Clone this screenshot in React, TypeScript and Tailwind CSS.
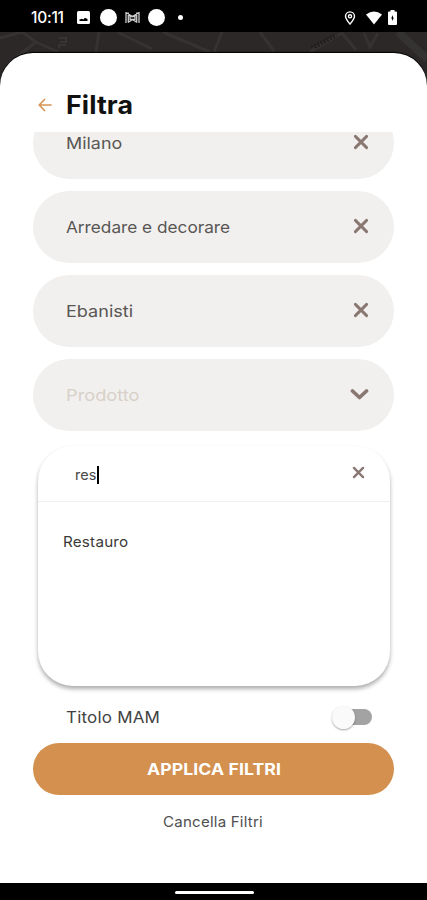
import React from "react";

function Cross({ className }: { className: string }) {
  return (
    <svg viewBox="0 0 16 16" className={className} fill="none" stroke="#897772" strokeWidth="2.9" strokeLinecap="round">
      <path d="M2.4 2.4 13.6 13.6M13.6 2.4 2.4 13.6" />
    </svg>
  );
}

function StatusBar() {
  return (
    <div className="flex h-8 shrink-0 items-center bg-black pt-[3px] text-white">
      <span className="ml-[31px] w-[46px] text-[15.5px] leading-5 font-medium tracking-[-0.25px]">10:11</span>
      <svg viewBox="0 0 13 13" className="h-[13px] w-[13px]">
        <rect width="13" height="13" rx="1.5" fill="#fff" />
        <path d="M2.5 10V8.5L5 7.8 6.3 8.6 8 6.7 10.5 8V10Z" fill="#000" />
      </svg>
      <div className="ml-[9.5px] h-[17px] w-[17px] rounded-full bg-white" />
      <svg viewBox="0 0 15 13" className="ml-[8px] h-[13px] w-[15px]" fill="none" stroke="#ccc" strokeWidth="1.3">
        <path d="M1 1v11M14 1v11M3.3 1.5v10M11.7 1.5v10M1 1.5l6.5 4 6.5-4M3 11.5l4.5-3 4.5 3" />
        <path d="M5 5.5h5v3H5Z" />
      </svg>
      <div className="ml-[8px] h-[17px] w-[17px] rounded-full bg-white" />
      <div className="ml-[13px] h-[5px] w-[5px] rounded-full bg-white" />
      <svg viewBox="0 0 12 15" className="ml-[161px] h-[14px] w-[12px]" fill="none" stroke="#fff" strokeWidth="1.5">
        <path d="M6 14C3.5 11 1.2 8.4 1.2 5.7a4.8 4.8 0 0 1 9.6 0C10.8 8.4 8.5 11 6 14Z" />
        <circle cx="6" cy="5.7" r="1.7" />
      </svg>
      <svg viewBox="0 0 17 14" className="ml-[10px] h-[14px] w-[16px]">
        <path d="M0 3.2Q8.5-2.8 17 3.2L8.5 14Z" fill="#fff" />
      </svg>
      <svg viewBox="0 0 9 15" className="ml-[6.5px] h-[15px] w-[9px]">
        <path d="M1 1.5h1.5V0h4v1.5H8q1 0 1 1V14q0 1-1 1H1q-1 0-1-1V2.5q0-1 1-1Z" fill="#fff" />
        <path d="M5 5 3 8.5H4V11L6 7.8H5Z" fill="#000" />
      </svg>
    </div>
  );
}

function MapStrip() {
  return (
    <svg viewBox="0 0 427 72" className="absolute top-8 left-0 h-[72px] w-[427px]">
      <rect width="427" height="72" fill="#2b2827" />
      <g fill="none" stroke="#353232" strokeWidth="3">
        <path d="M0 6 22 0 36 10 8 32M36 10 58 20M99 0 96 20M117 0 152 17M163 0 210 20M222 0 214 20M260 0 274 19M310 20 342 1 356 18M364 1 370 15 378 1" />
        <path d="M398 0 427 27" strokeWidth="8" />
      </g>
      <g fill="none" stroke="#1d1b1b" strokeWidth="1.5" strokeDasharray="2 1.5">
        <path d="M311 15 334 3M315 16 337 4" />
      </g>
      <path d="M59 6h7v4h-6M59 16v-3h7" fill="none" stroke="#3b3838" strokeWidth="1.5" />
    </svg>
  );
}

function Pill({ label, stretch, placeholder }: { label: string; stretch: string; placeholder?: boolean }) {
  return (
    <div
      className={
        "flex h-[72px] shrink-0 items-center justify-between rounded-full bg-[#f1f0ee] pl-[33px] text-[16.5px] " +
        (placeholder ? "pr-[25px] text-[#d8d0c8]" : "pr-[25.5px] text-[#595654]")
      }
    >
      <span className={"origin-left pt-px " + stretch}>{label}</span>
      {placeholder ? (
        <svg viewBox="0 0 19 13" className="h-[13px] w-[19px]" fill="none" stroke="#897772" strokeWidth="3.7" strokeLinecap="round" strokeLinejoin="round">
          <path d="M2.5 3 9.5 9.5 16.5 3" />
        </svg>
      ) : (
        <Cross className="mt-[-1px] h-[16px] w-[16px]" />
      )}
    </div>
  );
}

export default function App() {
  return (
    <div className="relative flex h-[900px] w-[427px] flex-col overflow-hidden bg-black font-['Inter',sans-serif]">
      <StatusBar />
      <MapStrip />
      <main className="relative mt-[21px] flex h-[829.5px] shrink-0 flex-col rounded-t-[33px] bg-white px-[33px] shadow-[0_-1px_1px_#000]">
        <header className="flex h-[79px] shrink-0 items-center pt-[24px]">
          <svg viewBox="0 0 14 14" className="ml-[5px] h-[14px] w-[14px]" fill="none" stroke="#d79556" strokeWidth="1.7" strokeLinejoin="round" strokeLinecap="round">
            <path d="M13 7H1.2M6.5 1.5 1.2 7l5.3 5.5" />
          </svg>
          <h1 className="ml-[14px] origin-left scale-x-[1.070] text-[25px] leading-[30px] font-bold tracking-[0.1px] text-[#111]">Filtra</h1>
        </header>
        <section className="flex h-[298.5px] shrink-0 flex-col justify-end gap-[12px] overflow-hidden">
          <Pill label="Milano" stretch="scale-x-[1.085]" />
          <Pill label="Arredare e decorare" stretch="scale-x-[1.043]" />
          <Pill label="Ebanisti" stretch="scale-x-[1.095]" />
          <Pill label="Prodotto" stretch="scale-x-[1.105]" placeholder />
        </section>
        <section className="mt-[15.5px] mr-[4px] ml-[5px] h-[240px] shrink-0 rounded-[35px] bg-white shadow-[0_3px_4px_rgba(0,0,0,0.32)]">
          <div className="flex h-[56px] items-center border-b border-[#f0f0f0] pt-[2px] pr-[25.5px] pl-[37px]">
            <span className="text-[14.5px] text-[#484848]">res</span>
            <span className="ml-px h-[18px] w-[2px] bg-black" />
            <Cross className="mt-[-5px] ml-auto h-[13px] w-[13px]" />
          </div>
          <div className="pt-[30px] pl-[24.5px] text-[14.5px] leading-[20px] text-[#3a3a3a]">
            <span className="inline-block origin-left scale-x-[1.050] tracking-[0.2px]">Restauro</span>
          </div>
        </section>
        <div className="flex h-[57px] shrink-0 items-center justify-between pt-[5px] pr-[22.5px] pl-[33px] text-[16px] text-[#424242]">
          <span className="origin-left scale-x-[1.060] tracking-[0.2px]">Titolo MAM</span>
          <div className="flex h-[16px] w-[36px] items-center rounded-full bg-[#a3a3a3]">
            <div className="ml-[-4px] h-[23px] w-[23px] shrink-0 rounded-full bg-[#fafafa] shadow-[0_1px_2px_rgba(0,0,0,0.35)]" />
          </div>
        </div>
        <button className="flex h-[52px] shrink-0 items-center justify-center rounded-full bg-[#d3904e] text-[16px] font-bold text-white">
          <span className="scale-x-[1.100] tracking-[0.1px]">APPLICA FILTRI</span>
        </button>
        <button className="mt-[17px] flex h-[20px] items-center justify-center text-[14.5px] text-[#505050]">
          <span className="scale-x-[1.040] tracking-[0.2px]">Cancella Filtri</span>
        </button>
      </main>
      <nav className="flex flex-1 items-center justify-center bg-black pt-[2px]">
        <div className="ml-px h-[3px] w-[79px] rounded-full bg-white" />
      </nav>
    </div>
  );
}
